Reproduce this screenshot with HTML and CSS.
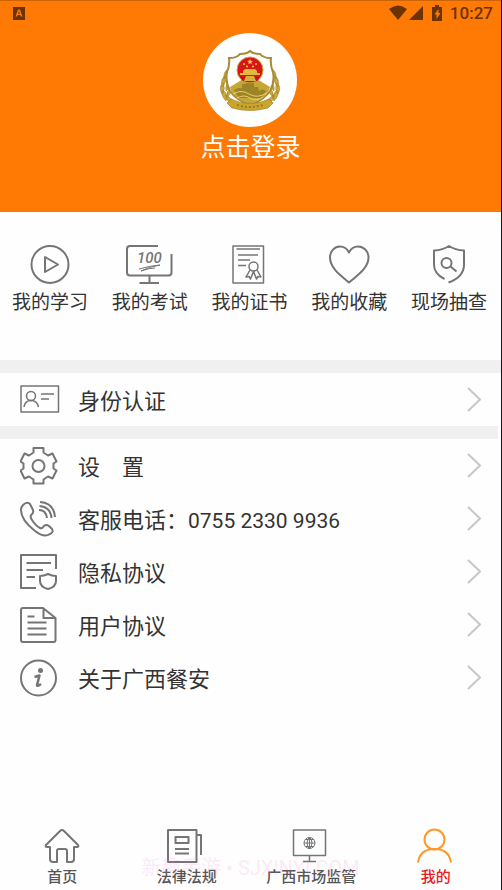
FILE: index.html
```html
<!DOCTYPE html>
<html lang="zh-CN">
<head>
<meta charset="utf-8">
<meta name="viewport" content="width=device-width, initial-scale=1">
<title>我的</title>
<link rel="stylesheet" href="styles.css">
</head>
<body>
<div class="page">
  <header class="header">
    <div class="status">
      <svg width="12" height="13" viewBox="0 0 12 13"><path fill="#6b3203" fill-rule="evenodd" d="M0 0h12v13H0zM5 2.500L2.500 9.500h1.600l.5-1.500h2.800l.5 1.500h1.600L7 2.500zM6 4l.9 2.700H5.100z"/></svg>
      <div class="status-right">
        <svg width="54" height="16" viewBox="0 0 54 16" fill="#6b3203">
          <path d="M0 4Q9-3 18 4L9 15z"/>
          <path d="M20 15L34 1v14z"/>
          <path fill-rule="evenodd" d="M43 2h3V0h4v2h3v14H43zM49.500 4L45.500 9.500h2V14l4-6h-2z"/>
        </svg>
        <span>10:27</span>
      </div>
    </div>
    <button class="login" type="button">
      <svg class="avatar" viewBox="0 0 94 94">
        <circle cx="47" cy="47" r="47" fill="#fff"/>
        <!-- wheat on both sides -->
        <g fill="#c9a83c" stroke="#96761c" stroke-width=".5">
          <path d="M25 36q-5 3-4 10q4-3 4-10zM22 43q-5 3-3 11q5-4 3-11zM20 50q-5 4-1 11q4-5 1-11zM20 57q-3 5 3 11q3-6-3-11zM27 40q1 6-3 10q-1-6 3-10zM27 47q1 7-4 11q-1-7 4-11zM28 54q1 7-4 10q-1-6 4-10zM23 62q0 6 7 10q1-6-7-10z"/>
          <path d="M69 36q5 3 4 10q-4-3-4-10zM72 43q5 3 3 11q-5-4-3-11zM74 50q5 4 1 11q-4-5-1-11zM74 57q3 5-3 11q-3-6 3-11zM67 40q-1 6 3 10q1-6-3-10zM67 47q-1 7 4 11q1-7-4-11zM66 54q-1 7 4 10q1-6-4-10zM71 62q0 6-7 10q-1-6 7-10z"/>
        </g>
        <path d="M47 18q-3 3-10 3q-3 4-11 4q1 7-2 14q-2 10 3 19q6 9 20 14q14-5 20-14q5-9 3-19q-3-7-2-14q-8 0-11-4q-7 0-10-3z" fill="#fff" stroke="#a98b35" stroke-width="2"/>
        <path d="M27 54l18-11h4l18 11q-2 11-20 17Q29 65 27 54z" fill="#c4a737"/>
        <path d="M31 57q7-4 8-1V51h4v-2h8v5h4l1 4q4-3 7 0l-5 7H36z" fill="#9c8326"/>
        <path d="M30 61q8-5 16 0t18-1M34 65q7-4 13 0t13-1" fill="none" stroke="#e5cf73"/>
        <circle cx="47" cy="37" r="13" fill="#d81519" stroke="#c8a83b" stroke-width="1"/>
        <path d="M47 26l.8 1.800 2 .2-1.500 1.300.4 2L47 30.300l-1.700 1 .4-2-1.500-1.300 2-.2z" fill="#f3cf48"/>
        <g fill="#f3cf48"><circle cx="41" cy="31" r="1"/><circle cx="53" cy="31" r="1"/><circle cx="44" cy="33.500" r="1"/><circle cx="50" cy="33.500" r="1"/></g>
        <path d="M42 36h10l2 2v2h3v2H37v-2h3v-2z" fill="#e4b93a"/>
        <path d="M37 44h20l-3 4H40z" fill="#c31317"/>
        <path d="M43 43h8l2 5H41z" fill="#d7b13c"/>
        <path d="M28 66q19 9 38 0l4 4-5 5q-18 5-36 0l-5-5z" fill="#c9a52f" stroke="#99791d" stroke-width=".6"/>
        <path d="M34 72q13 4 26 0" fill="none" stroke="#9b7c22" stroke-width="2" stroke-dasharray="2 2"/>
      </svg>
      <span>点击登录</span>
    </button>
  </header>

  <nav class="shortcuts">
    <a href="#">
      <svg class="shortcut-icon" viewBox="0 0 48 40"><circle cx="24" cy="19.500" r="18.500"/><path d="M19 12v15l13-7.500z"/></svg>
      <span>我的学习</span>
    </a>
    <a href="#">
      <svg class="shortcut-icon" viewBox="0 0 48 40"><path d="M32 1H4Q1 1 1 4v23.500q0 3 3 3h38.500q3 0 3-3V9M23.500 31v7M13.500 38H33"/><path d="M13 24q10-3 21-4q-12 2-19 6q8-3 14-3" stroke-width="1"/><text class="score" x="11" y="18">100</text></svg>
      <span>我的考试</span>
    </a>
    <a href="#">
      <svg class="shortcut-icon" viewBox="0 0 48 40"><path d="M8 1h30.500v37H8zM11.500 4H35M13 10h20M13 15h12M13 20.500h8" stroke-width="1.500"/><circle cx="28.500" cy="21.500" r="4.500" stroke-width="1.500"/><path d="M25 25l-4 7 3-.5 1.500 2.500 3-7.500 3 7.500 1.500-2.500 3 .5-4-7" stroke-width="1.500"/></svg>
      <span>我的证书</span>
    </a>
    <a href="#">
      <svg class="shortcut-icon" viewBox="0 0 48 40"><path d="M24 37.500C18 32 5 24 5 12.500C5 6 9.500 1.500 15 1.500c4 0 7 2 9 6c2-4 5-6 9-6c5.500 0 10.500 4.500 10.500 11C43.500 24 30 32 24 37.500z"/></svg>
      <span>我的收藏</span>
    </a>
    <a href="#">
      <svg class="shortcut-icon" viewBox="0 0 48 40"><path d="M19.500 34Q9 29 9 19.500V5.500Q18 5 24 1q6 4 15 4.500v14Q39 32 23.500 37.500"/><circle cx="21.500" cy="18" r="5"/><path d="M25.500 21.500l6 5"/></svg>
      <span>现场抽查</span>
    </a>
  </nav>

  <main class="menu">
    <a class="row identity" href="#">
      <svg class="row-icon" viewBox="0 0 40 40"><path d="M1 7h37.500v26H1z" stroke-width="1.500"/><circle cx="11" cy="17" r="4.500" stroke-width="1.500"/><path d="M4 28q1-6.500 7-6.500T18.500 28M21 15h13M21 20h8" stroke-width="1.500"/></svg>
      <span>身份认证</span>
      <svg class="arrow" viewBox="0 0 14 26"><path d="M1 2l12 11.500L1 25"/></svg>
    </a>
    <a class="row" href="#">
      <svg class="row-icon" viewBox="0 0 40 40"><path d="M13.500 3h10v4.500l4.500 3 4.500-2 4 8-3 2v5l3 2-4 8-4.500-2-4.500 3v4h-10v-4l-4.500-3-4.500 2-4-8 3-2v-5l-3-2 4-8 4.500 2 4.500-3z"/><circle cx="18.500" cy="21" r="6"/></svg>
      <span>设&#12288;置</span>
      <svg class="arrow" viewBox="0 0 14 26"><path d="M1 2l12 11.500L1 25"/></svg>
    </a>
    <a class="row" href="tel:075523309936">
      <svg class="row-icon" viewBox="0 0 40 40"><path d="M3 7q4-4 7-1l3 6q1 3-2 5q-1 2 1 5q4 6 8 8q2 1 4-2q2-2 5 0l3 3q2 3-2 5q-6 4-15-3Q1 22 1 12q0-3 2-5zM19 12q7 0 8 8M19.500 8q11 1 12 12M20 4q14 1 15 15" /></svg>
      <span>客服电话：<span class="number">0755 2330 9936</span></span>
      <svg class="arrow" viewBox="0 0 14 26"><path d="M1 2l12 11.500L1 25"/></svg>
    </a>
    <a class="row" href="#">
      <svg class="row-icon" viewBox="0 0 40 40"><path d="M16 37H1V4h35v14M6.500 12H31M6.500 19H23M6.500 26H15"/><path d="M20 25q4 0 8-2q4 2 8 2v5q0 6-8 8q-8-2-8-8z"/></svg>
      <span>隐私协议</span>
      <svg class="arrow" viewBox="0 0 14 26"><path d="M1 2l12 11.500L1 25"/></svg>
    </a>
    <a class="row" href="#">
      <svg class="row-icon" viewBox="0 0 40 40"><path d="M3 4h20l12.500 10v22q0 2-2 2H3q-2 0-2-2V6q0-2 2-2zM23.500 4v10h12M7.500 12.500h7M7.500 18.500h19M7.500 24.500h19M7.500 30.500h19"/></svg>
      <span>用户协议</span>
      <svg class="arrow" viewBox="0 0 14 26"><path d="M1 2l12 11.500L1 25"/></svg>
    </a>
    <a class="row" href="#">
      <svg class="row-icon" viewBox="0 0 40 40"><circle cx="18.500" cy="21" r="17.500"/><path d="M14.500 20l5-1.500-2.500 9.500q0 2 4-1" stroke-width="2.500"/><circle cx="20.500" cy="13.500" r="1.500" fill="#757575"/></svg>
      <span>关于广西餐安</span>
      <svg class="arrow" viewBox="0 0 14 26"><path d="M1 2l12 11.500L1 25"/></svg>
    </a>
  </main>

  <nav class="tabs">
    <a href="#">
      <svg class="tab-icon" viewBox="0 0 40 36"><path d="M18 3q2-2 4 0l14 14q1 2-1 2h-3v12q0 3-3 3h-4V23q0-2-2-2h-6q-2 0-2 2v11h-4q-3 0-3-3V19H5q-2 0-1-2z"/></svg>
      <span>首页</span>
    </a>
    <a href="#">
      <svg class="tab-icon" viewBox="0 0 40 36"><path d="M1 2h28.500v32H1zM30 7h4v20M8.500 9h13v6h-13zM8 21h14M8 25.500h14"/></svg>
      <span>法律法规</span>
    </a>
    <a href="#">
      <svg class="tab-icon" viewBox="0 0 40 36"><path d="M2.500 2h32v25.500h-32zM18.500 28v5M12 33.500h13" stroke-width="1.500"/><path d="M18.500 9v12M13 15h11M14 11.500h9M14 18.500h9M18.500 9q-5 6 0 12q5-6 0-12" stroke-width="1"/><circle cx="18.500" cy="15" r="5.500" stroke-width="1"/></svg>
      <span>广西市场监管</span>
    </a>
    <a class="active" href="#">
      <svg class="tab-icon" viewBox="0 0 40 36"><circle cx="18.500" cy="11.500" r="10"/><path d="M2 34.500Q4 21 18.500 21T35 34.500"/></svg>
      <span>我的</span>
    </a>
    <div class="watermark">新趣手游 • SJXINYI.COM</div>
  </nav>
</div>
</body>
</html>
```
FILE: styles.css
```css
* {
  box-sizing: border-box;
}

body {
  margin: 0;
  font-family: Roboto, "Noto Sans CJK SC", sans-serif;
  color: #333;
  background: #fefefe;
}

a {
  color: inherit;
  text-decoration: none;
}

svg {
  display: block;
  flex: none;
}

.page {
  display: flex;
  flex-direction: column;
  min-height: 100vh;
  border-right: 1px solid #10181c;
}

.header {
  padding-bottom: 44px;
  background: #ff7905;
  border-top: 1px solid #cc6308;
}

.status {
  display: flex;
  justify-content: space-between;
  align-items: center;
  height: 24px;
  padding: 0 8px 0 13px;
}

.status-right {
  display: flex;
  align-items: center;
  gap: 7px;
  font-size: 17px;
  font-weight: 500;
  color: #6b3203;
}

.login {
  display: flex;
  flex-direction: column;
  align-items: center;
  margin: 8px auto 0;
  padding: 0;
  border: 0;
  background: none;
  font-family: inherit;
  font-size: 25px;
  line-height: 41px;
  color: #fff;
}

.avatar {
  width: 94px;
  height: 94px;
}

.shortcuts {
  display: grid;
  grid-template-columns: repeat(5, 1fr);
  padding: 33px 2px 40px 0;
  border-bottom: 13px solid #f0f0f0;
}

.shortcuts a {
  display: flex;
  flex-direction: column;
  align-items: center;
  font-size: 19px;
  line-height: 35px;
}

.shortcut-icon {
  width: 48px;
  height: 40px;
}

.shortcut-icon,
.row-icon,
.tab-icon {
  fill: none;
  stroke: #757575;
  stroke-width: 2;
  stroke-linejoin: round;
}

.score {
  font: italic 500 15px Roboto, sans-serif;
  fill: #757575;
  stroke: none;
}

.row {
  display: flex;
  align-items: center;
  gap: 18px;
  height: 53px;
  padding: 0 20px 2px;
  font-size: 22px;
}

.identity {
  height: 66px;
  margin-right: 3px;
  padding-right: 17px;
  border-bottom: 13px solid #f0f0f0;
}

.number {
  font-size: 21px;
}

.row-icon {
  width: 40px;
  height: 40px;
}

.arrow {
  width: 14px;
  height: 26px;
  margin-left: auto;
  fill: none;
  stroke: #c7c7cc;
  stroke-width: 2;
}

.tabs {
  position: relative;
  display: grid;
  grid-template-columns: repeat(4, 1fr);
  margin-top: auto;
  padding-right: 3px;
}

.tabs a {
  display: flex;
  flex-direction: column;
  align-items: center;
  font-size: 15px;
  font-weight: 500;
  line-height: 26px;
  color: #555;
}

.tab-icon {
  width: 40px;
  height: 36px;
}

.tabs .active {
  color: #e8201c;
}

.active .tab-icon {
  stroke: #fb9a2c;
}

.watermark {
  position: absolute;
  left: 0;
  right: 0;
  bottom: 8px;
  font-size: 20px;
  line-height: 28px;
  text-align: center;
  color: rgba(240, 120, 220, 0.16);
  pointer-events: none;
}
```
